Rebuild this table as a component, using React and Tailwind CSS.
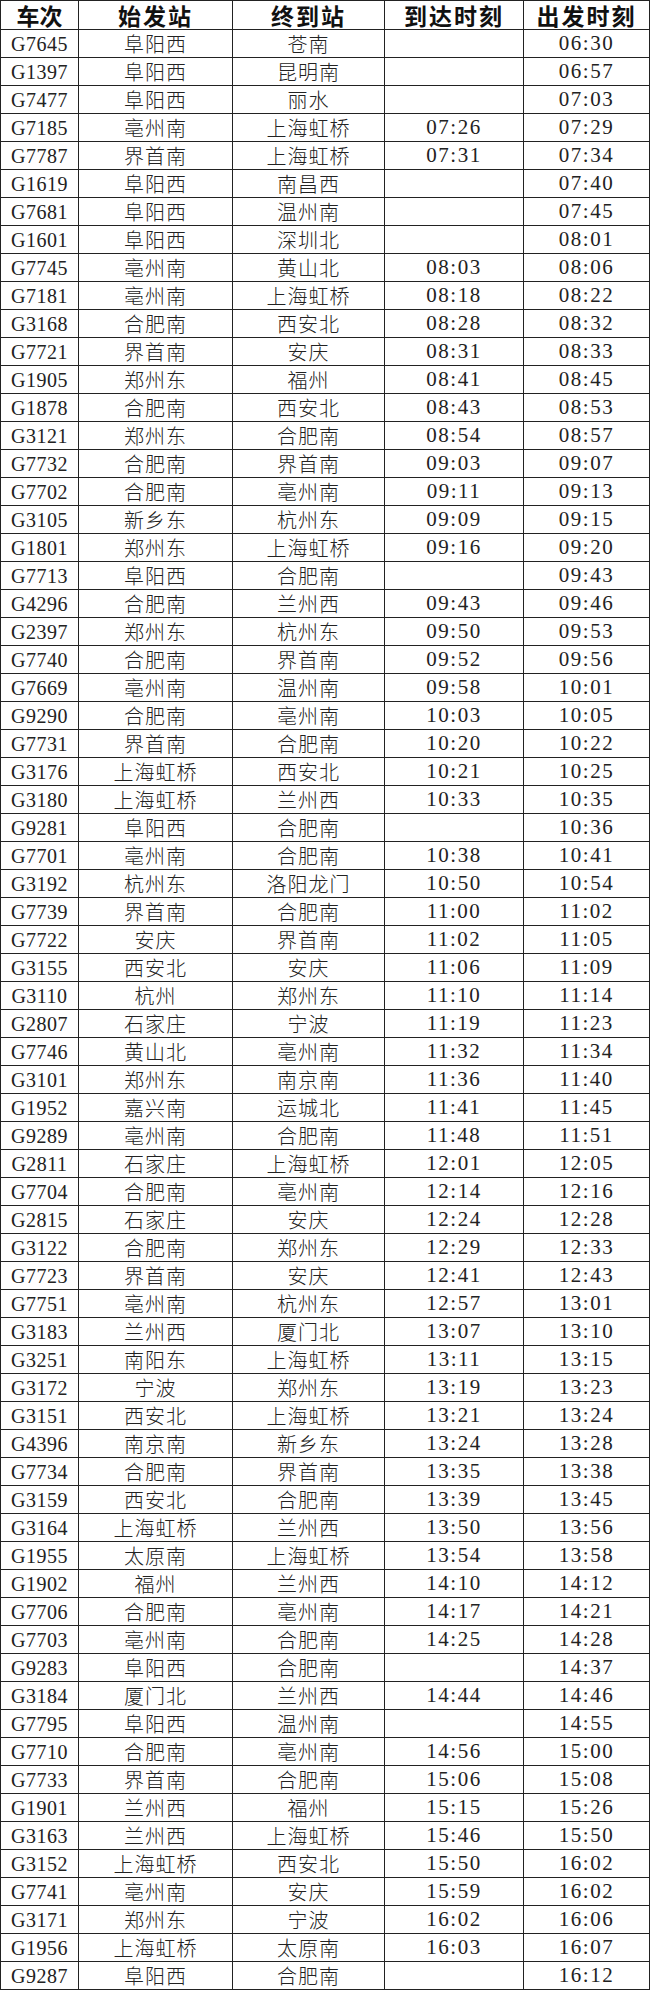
const rows = [
  ["G7645", "阜阳西", "苍南", "", "06:30"],
  ["G1397", "阜阳西", "昆明南", "", "06:57"],
  ["G7477", "阜阳西", "丽水", "", "07:03"],
  ["G7185", "亳州南", "上海虹桥", "07:26", "07:29"],
  ["G7787", "界首南", "上海虹桥", "07:31", "07:34"],
  ["G1619", "阜阳西", "南昌西", "", "07:40"],
  ["G7681", "阜阳西", "温州南", "", "07:45"],
  ["G1601", "阜阳西", "深圳北", "", "08:01"],
  ["G7745", "亳州南", "黄山北", "08:03", "08:06"],
  ["G7181", "亳州南", "上海虹桥", "08:18", "08:22"],
  ["G3168", "合肥南", "西安北", "08:28", "08:32"],
  ["G7721", "界首南", "安庆", "08:31", "08:33"],
  ["G1905", "郑州东", "福州", "08:41", "08:45"],
  ["G1878", "合肥南", "西安北", "08:43", "08:53"],
  ["G3121", "郑州东", "合肥南", "08:54", "08:57"],
  ["G7732", "合肥南", "界首南", "09:03", "09:07"],
  ["G7702", "合肥南", "亳州南", "09:11", "09:13"],
  ["G3105", "新乡东", "杭州东", "09:09", "09:15"],
  ["G1801", "郑州东", "上海虹桥", "09:16", "09:20"],
  ["G7713", "阜阳西", "合肥南", "", "09:43"],
  ["G4296", "合肥南", "兰州西", "09:43", "09:46"],
  ["G2397", "郑州东", "杭州东", "09:50", "09:53"],
  ["G7740", "合肥南", "界首南", "09:52", "09:56"],
  ["G7669", "亳州南", "温州南", "09:58", "10:01"],
  ["G9290", "合肥南", "亳州南", "10:03", "10:05"],
  ["G7731", "界首南", "合肥南", "10:20", "10:22"],
  ["G3176", "上海虹桥", "西安北", "10:21", "10:25"],
  ["G3180", "上海虹桥", "兰州西", "10:33", "10:35"],
  ["G9281", "阜阳西", "合肥南", "", "10:36"],
  ["G7701", "亳州南", "合肥南", "10:38", "10:41"],
  ["G3192", "杭州东", "洛阳龙门", "10:50", "10:54"],
  ["G7739", "界首南", "合肥南", "11:00", "11:02"],
  ["G7722", "安庆", "界首南", "11:02", "11:05"],
  ["G3155", "西安北", "安庆", "11:06", "11:09"],
  ["G3110", "杭州", "郑州东", "11:10", "11:14"],
  ["G2807", "石家庄", "宁波", "11:19", "11:23"],
  ["G7746", "黄山北", "亳州南", "11:32", "11:34"],
  ["G3101", "郑州东", "南京南", "11:36", "11:40"],
  ["G1952", "嘉兴南", "运城北", "11:41", "11:45"],
  ["G9289", "亳州南", "合肥南", "11:48", "11:51"],
  ["G2811", "石家庄", "上海虹桥", "12:01", "12:05"],
  ["G7704", "合肥南", "亳州南", "12:14", "12:16"],
  ["G2815", "石家庄", "安庆", "12:24", "12:28"],
  ["G3122", "合肥南", "郑州东", "12:29", "12:33"],
  ["G7723", "界首南", "安庆", "12:41", "12:43"],
  ["G7751", "亳州南", "杭州东", "12:57", "13:01"],
  ["G3183", "兰州西", "厦门北", "13:07", "13:10"],
  ["G3251", "南阳东", "上海虹桥", "13:11", "13:15"],
  ["G3172", "宁波", "郑州东", "13:19", "13:23"],
  ["G3151", "西安北", "上海虹桥", "13:21", "13:24"],
  ["G4396", "南京南", "新乡东", "13:24", "13:28"],
  ["G7734", "合肥南", "界首南", "13:35", "13:38"],
  ["G3159", "西安北", "合肥南", "13:39", "13:45"],
  ["G3164", "上海虹桥", "兰州西", "13:50", "13:56"],
  ["G1955", "太原南", "上海虹桥", "13:54", "13:58"],
  ["G1902", "福州", "兰州西", "14:10", "14:12"],
  ["G7706", "合肥南", "亳州南", "14:17", "14:21"],
  ["G7703", "亳州南", "合肥南", "14:25", "14:28"],
  ["G9283", "阜阳西", "合肥南", "", "14:37"],
  ["G3184", "厦门北", "兰州西", "14:44", "14:46"],
  ["G7795", "阜阳西", "温州南", "", "14:55"],
  ["G7710", "合肥南", "亳州南", "14:56", "15:00"],
  ["G7733", "界首南", "合肥南", "15:06", "15:08"],
  ["G1901", "兰州西", "福州", "15:15", "15:26"],
  ["G3163", "兰州西", "上海虹桥", "15:46", "15:50"],
  ["G3152", "上海虹桥", "西安北", "15:50", "16:02"],
  ["G7741", "亳州南", "安庆", "15:59", "16:02"],
  ["G3171", "郑州东", "宁波", "16:02", "16:06"],
  ["G1956", "上海虹桥", "太原南", "16:03", "16:07"],
  ["G9287", "阜阳西", "合肥南", "", "16:12"],
];

const cols = "grid grid-cols-[78px_154px_152px_139px_126px]";
const cell = "flex items-center justify-center border-r border-b border-[#222]";
const cjk = "font-['Noto_Sans_CJK_SC',sans-serif]";
const num = "font-['Liberation_Serif','Noto_Sans_CJK_SC',serif]";

export default function App() {
  return (
    <div className="w-[650px] bg-white text-[#222]">
      <div className="border-l border-t border-[#222]">
        {/* header row */}
        <div className={`${cols} h-[29px] ${cjk} text-[23px] font-bold leading-none text-[#111]`}>
          <div className={cell}>车次</div>
          <div className={`${cell} tracking-[2px]`}>始发站</div>
          <div className={`${cell} tracking-[2px]`}>终到站</div>
          <div className={`${cell} tracking-[2px]`}>到达时刻</div>
          <div className={`${cell} tracking-[2px]`}>出发时刻</div>
        </div>

        {rows.map((r) => (
          <div key={r[0]} className={`${cols} h-[28px] leading-none`}>
            <div className={`${cell} ${num} text-[20px] tracking-[0.5px]`}>{r[0]}</div>
            <div className={`${cell} ${cjk} font-light text-[20px] tracking-[1px]`}>{r[1]}</div>
            <div className={`${cell} ${cjk} font-light text-[20px] tracking-[1px]`}>{r[2]}</div>
            <div className={`${cell} ${num} text-[21px] tracking-[1.5px]`}>{r[3]}</div>
            <div className={`${cell} ${num} text-[21px] tracking-[1.5px]`}>{r[4]}</div>
          </div>
        ))}
      </div>
    </div>
  );
}
